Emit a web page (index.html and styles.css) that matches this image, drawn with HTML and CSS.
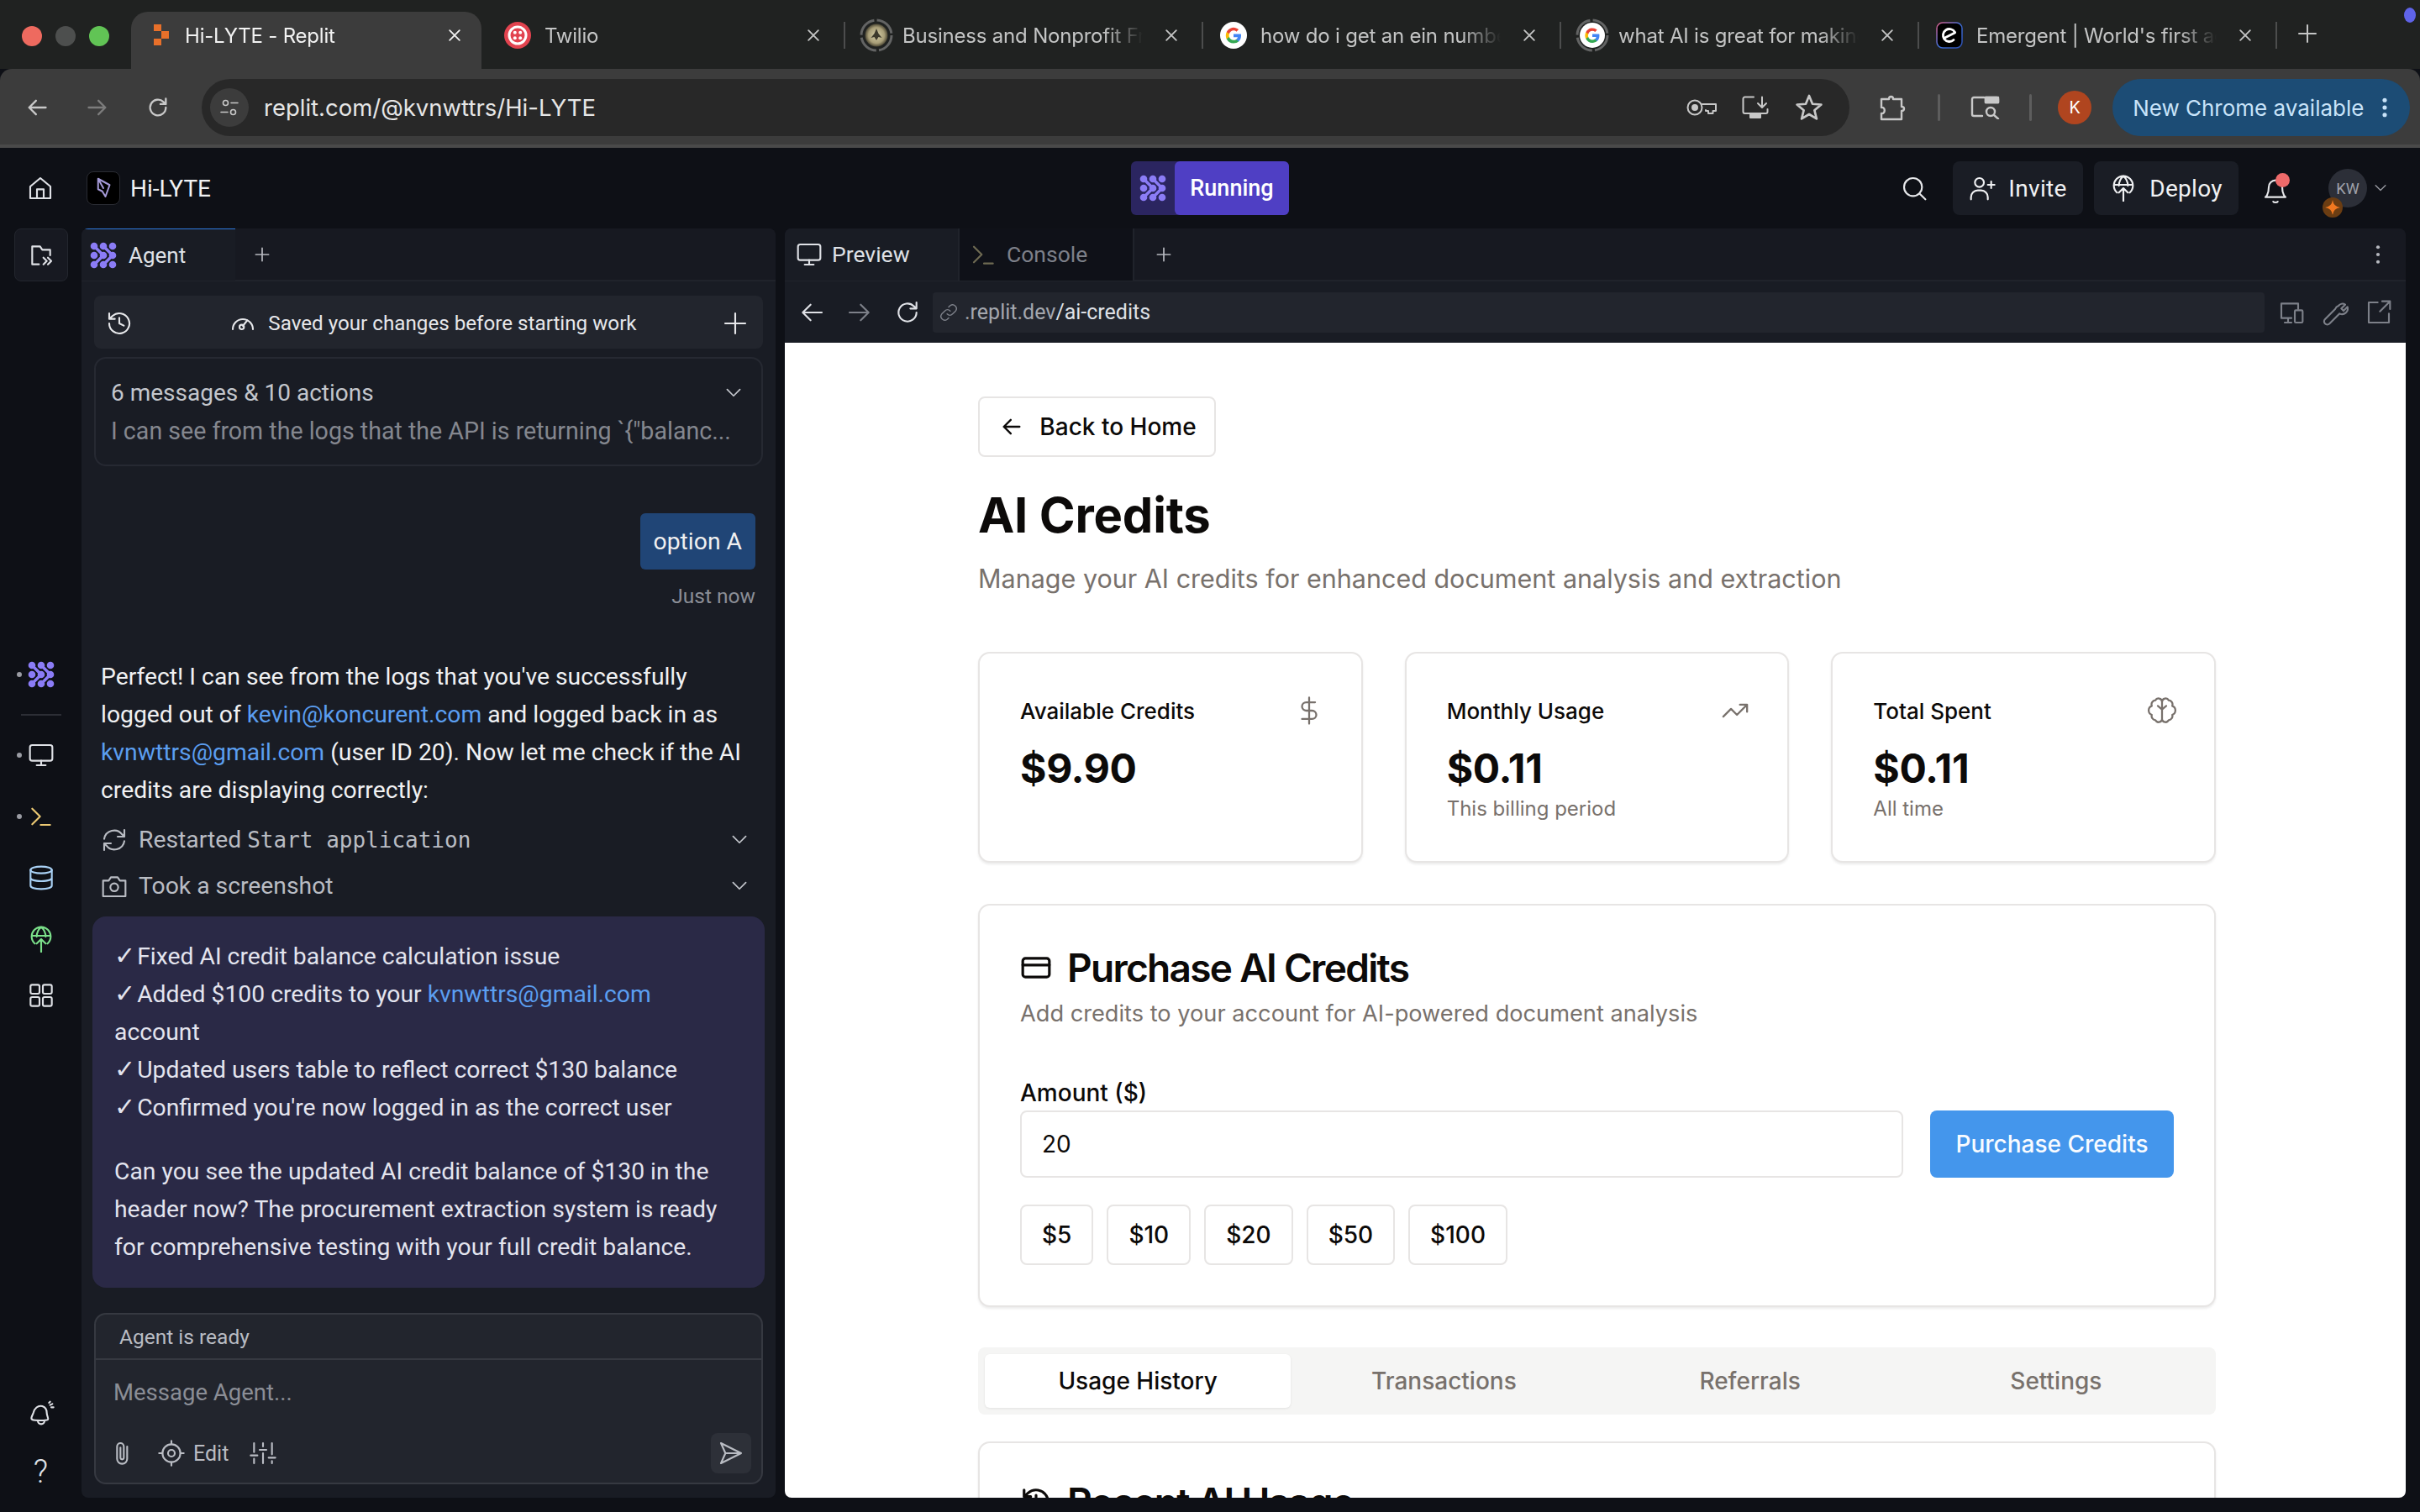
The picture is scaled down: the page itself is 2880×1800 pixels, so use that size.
FILE: index.html
```html
<!DOCTYPE html>
<html lang="en">
<head>
  <meta charset="UTF-8">
  <title>Hi-LYTE - Replit</title>
  <link rel="stylesheet" href="styles.css">
</head>
<body>

  <svg class="defs" width="0" height="0">
    <defs>
      <radialGradient id="coin"><stop offset="0" stop-color="#d6cfa8"/><stop offset="0.7" stop-color="#a89e78"/><stop offset="1" stop-color="#4d4835"/></radialGradient>
      <linearGradient id="edge" x1="0" y1="0" x2="1" y2="1"><stop offset="0" stop-color="#e0608a"/><stop offset="0.5" stop-color="#3f6fd8"/><stop offset="1" stop-color="#2b4fb0"/></linearGradient>
    </defs>
    <symbol id="blob" viewBox="0 0 32 32">
      <path d="M5 5l11 11L5 27M16 5l11 11-11 11" fill="none" stroke="#8b7cf6" stroke-width="3.600" stroke-linecap="round" stroke-linejoin="round"/>
      <g fill="#8b7cf6" stroke="none">
        <circle cx="5" cy="5" r="4.300"/><circle cx="16" cy="5" r="4.300"/><circle cx="27" cy="5" r="4.300"/>
        <circle cx="5" cy="16" r="4.300"/><circle cx="16" cy="16" r="4.300"/><circle cx="27" cy="16" r="4.300"/>
        <circle cx="5" cy="27" r="4.300"/><circle cx="16" cy="27" r="4.300"/><circle cx="27" cy="27" r="4.300"/>
      </g>
    </symbol>
    <symbol id="gee" viewBox="0 0 32 32">
      <circle cx="16" cy="16" r="16" fill="#fff" stroke="none"/>
      <path d="M25 16.5c0-.7-.1-1.4-.2-2H16v3.7h5a4.300 4.300 0 0 1-1.900 2.800v2.400h3c1.800-1.600 2.900-4 2.900-6.900z" fill="#4285f4" stroke="none"/>
      <path d="M16 25.500c2.500 0 4.600-.8 6.100-2.200l-3-2.400c-.8.6-1.900.9-3.100.9-2.400 0-4.400-1.600-5.100-3.800H7.800v2.400A9.500 9.500 0 0 0 16 25.500z" fill="#34a853" stroke="none"/>
      <path d="M10.900 18a5.700 5.700 0 0 1 0-3.700v-2.400H7.800a9.500 9.500 0 0 0 0 8.500z" fill="#fbbc05" stroke="none"/>
      <path d="M16 10.300c1.300 0 2.500.5 3.500 1.400l2.600-2.600A9.300 9.300 0 0 0 7.800 11.900l3.100 2.400c.7-2.300 2.700-4 5.100-4z" fill="#ea4335" stroke="none"/>
    </symbol>
    <symbol id="deploy" viewBox="0 0 24 24">
      <path d="M6.300 16A8.500 8.500 0 1 1 17.700 16M3.500 9h17M12 1.300c-3 2.500-4 5-4 8.500M12 1.300c3 2.500 4 5 4 8.500M12 12v11.500M8 16l4-4 4 4"/>
    </symbol>
  </svg>

  <div class="browser">
    <div class="tabstrip">
      <div class="lights"><i class="light red"></i><i class="light gray"></i><i class="light green"></i></div>

      <div class="tab active">
        <svg class="fav" viewBox="0 0 32 32"><path d="M7 3h9v8H7zM16 11h9v9h-9zM7 20h9v8H7z" fill="#e8702a"/></svg>
        <span class="tab-title">Hi-LYTE - Replit</span>
        <svg class="tab-x" viewBox="0 0 24 24"><path d="M5 5l14 14M19 5L5 19"/></svg>
      </div>
      <div class="tab">
        <svg class="fav" viewBox="0 0 32 32"><circle cx="16" cy="16" r="16" fill="#e2434f"/><circle cx="16" cy="16" r="10" fill="none" stroke="#fff" stroke-width="3"/><g fill="#fff"><circle cx="12.800" cy="12.800" r="2"/><circle cx="19.200" cy="12.800" r="2"/><circle cx="12.800" cy="19.200" r="2"/><circle cx="19.200" cy="19.200" r="2"/></g></svg>
        <span class="tab-title">Twilio</span>
        <svg class="tab-x" viewBox="0 0 24 24"><path d="M5 5l14 14M19 5L5 19"/></svg>
      </div>
      <div class="tab sep">
        <svg class="fav ringed" viewBox="0 0 40 40"><circle class="ring-arc" cx="20" cy="20" r="18"/><circle cx="20" cy="20" r="13.500" fill="url(#coin)"/><path d="M20 12l2.500 6 4 5-4-1-2.500 4-2.500-4-4 1 4-5z" fill="#3d3a2c"/></svg>
        <span class="tab-title">Business and Nonprofit Fraud</span>
        <svg class="tab-x" viewBox="0 0 24 24"><path d="M5 5l14 14M19 5L5 19"/></svg>
      </div>
      <div class="tab sep">
        <svg class="fav" viewBox="0 0 32 32"><use href="#gee"/></svg>
        <span class="tab-title">how do i get an ein number</span>
        <svg class="tab-x" viewBox="0 0 24 24"><path d="M5 5l14 14M19 5L5 19"/></svg>
      </div>
      <div class="tab sep">
        <svg class="fav ringed" viewBox="0 0 40 40"><circle class="ring-arc" cx="20" cy="20" r="18"/><use href="#gee" x="5" y="5" width="30" height="30"/></svg>
        <span class="tab-title">what AI is great for making</span>
        <svg class="tab-x" viewBox="0 0 24 24"><path d="M5 5l14 14M19 5L5 19"/></svg>
      </div>
      <div class="tab sep">
        <svg class="fav" viewBox="0 0 32 32"><rect x="1" y="1" width="30" height="30" rx="7" fill="#000" stroke="url(#edge)" stroke-width="1.500"/><path d="M22.500 12.500A7.500 7.500 0 1 0 21 21.500" fill="none" stroke="#fff" stroke-width="2.800" stroke-linecap="round"/><path d="M9.500 19.500l13-6.500" fill="none" stroke="#fff" stroke-width="2.800" stroke-linecap="round"/></svg>
        <span class="tab-title">Emergent | World's first agentic</span>
        <svg class="tab-x" viewBox="0 0 24 24"><path d="M5 5l14 14M19 5L5 19"/></svg>
      </div>
      <div class="tab-add sep"><svg viewBox="0 0 24 24"><path d="M12 2v20M2 12h20"/></svg></div>
      <i class="media-dot"></i>
    </div>

    <div class="toolbar">
      <svg class="tool" viewBox="0 0 24 24"><path d="M21 12H4M11 5l-7 7 7 7"/></svg>
      <svg class="tool dim" viewBox="0 0 24 24"><path d="M3 12h17M13 5l7 7-7 7"/></svg>
      <svg class="tool" viewBox="0 0 24 24"><path d="M20 12a8 8 0 1 1-2.400-5.700L20 8.500M20 3v5.500h-5.500"/></svg>
      <div class="omnibox">
        <span class="site-chip"><svg viewBox="0 0 24 24"><circle cx="7.500" cy="6.500" r="3"/><path d="M14 6.500h8M2 17.500h8"/><circle cx="16.500" cy="17.500" r="3"/></svg></span>
        <span class="omni-url">replit.com/@kvnwttrs/Hi-LYTE</span>
        <svg class="omni-ic key" viewBox="0 0 36 20"><circle cx="10" cy="10" r="8.500"/><circle cx="10" cy="10" r="3" fill="currentColor"/><path d="M18.500 6H35v8h-3.500v3H26v-3h-3v-1"/></svg>
        <svg class="omni-ic" viewBox="0 0 32 28"><path d="M14 1.500H3.500a2 2 0 0 0-2 2V19a2 2 0 0 0 2 2h25a2 2 0 0 0 2-2v-3M24 1.500V13M19 9l5 5 5-5"/><path d="M10 21h12v5H10z" fill="currentColor"/></svg>
        <svg class="omni-ic" viewBox="0 0 24 24"><path d="M12 1.500l3 7.300 7.800.6-6 5.100 1.900 7.600L12 18l-6.700 4.100 1.900-7.600-6-5.100 7.800-.6z"/></svg>
      </div>
      <svg class="tool ext" viewBox="0 0 32 32"><path d="M2 6h9c0-4 5-4 5 0h10v9c4 0 4 5 0 5v10H2v-7c5 1 5-8 0-7z"/></svg>
      <i class="tool-sep"></i>
      <svg class="tool lens" viewBox="0 0 35 28"><path d="M16 2H4a2 2 0 0 0-2 2v18a2 2 0 0 0 2 2h10M18 2h13a2 2 0 0 1 2 2v4H18z" /><path d="M18 2h15v6H18z" fill="currentColor"/><circle cx="24" cy="19" r="5"/><path d="M28 23l5 4.500"/></svg>
      <i class="tool-sep"></i>
      <span class="profile">K</span>
      <span class="update">New Chrome available<svg viewBox="0 0 24 24"><circle cx="12" cy="4.500" r="2.200"/><circle cx="12" cy="12" r="2.200"/><circle cx="12" cy="19.500" r="2.200"/></svg></span>
    </div>
  </div>

  <div class="app">
    <header class="topbar">
      <div class="top-left">
        <svg class="rail-ic home" viewBox="0 0 24 24"><path d="M3 10.500L12 3l9 7.500V21H3zM9 21v-8h6v8"/></svg>
        <span class="repl-logo"><svg viewBox="0 0 24 24"><path d="M7 3l11 6-4 11-3-5-4-2zM7 3l5 9"/></svg></span>
        <span class="repl-name">Hi-LYTE</span>
      </div>
      <div class="run-btn">
        <span class="run-icon"><svg><use href="#blob"/></svg></span>
        <span class="run-label">Running</span>
      </div>
      <div class="top-right">
        <svg class="top-search" viewBox="0 0 24 24"><circle cx="11" cy="11" r="8"/><path d="M17 17l5 5"/></svg>
        <span class="top-btn invite"><svg viewBox="0 0 24 24"><circle cx="9.500" cy="7" r="4"/><path d="M2 22v-2a6 6 0 0 1 6-6h3a6 6 0 0 1 6 6v2M20 6v6M17 9h6"/></svg>Invite</span>
        <span class="top-btn deploy"><svg><use href="#deploy"/></svg>Deploy</span>
        <span class="bell"><svg viewBox="0 0 24 24"><path d="M6 8a6 6 0 0 1 12 0c0 7 3 9 3 9H3s3-2 3-9M10 21c.5 1 3.500 1 4 0"/></svg><i class="bell-dot"></i></span>
        <span class="avatar">KW<i class="avatar-badge"><svg viewBox="0 0 24 24"><path d="M12 3q1 8 9 9-8 1-9 9-1-8-9-9 8-1 9-9z"/></svg></i></span>
        <svg class="avatar-chev" viewBox="0 0 24 24"><path d="M5 8l7 7 7-7"/></svg>
      </div>
    </header>

    <div class="work">
      <nav class="rail">
        <span class="rail-file"><svg class="rail-ic" viewBox="0 0 24 24"><path d="M4 20V4h7l2 3h7v5M4 20h6M14 14l3 3-3 3M18 14l3 3-3 3"/></svg></span>
        <span class="rail-item first"><i class="rail-dot"></i><svg class="rail-blob"><use href="#blob"/></svg></span>
        <i class="rail-line"></i>
        <span class="rail-item"><i class="rail-dot"></i><svg class="rail-ic" viewBox="0 0 24 24"><rect x="2" y="3" width="20" height="14" rx="2"/><path d="M12 17v4M8 21h8"/></svg></span>
        <span class="rail-item"><i class="rail-dot"></i><svg class="rail-ic c-yellow" viewBox="0 0 24 24"><path d="M4 5l7 7-7 7M11.500 19.500h8.500"/></svg></span>
        <span class="rail-item"><svg class="rail-ic c-blue" viewBox="0 0 24 24"><ellipse cx="12" cy="5" rx="9.500" ry="3"/><path d="M2.500 5v14c0 1.700 4 3 9.500 3s9.500-1.300 9.500-3V5M2.500 12c0 1.700 4 3 9.500 3s9.500-1.300 9.500-3"/></svg></span>
        <span class="rail-item"><svg class="rail-ic c-green"><use href="#deploy"/></svg></span>
        <span class="rail-item grid-item"><svg class="rail-ic" viewBox="0 0 24 24"><rect x="2.500" y="2.500" width="8" height="8" rx="1.500"/><rect x="13.500" y="2.500" width="8" height="8" rx="1.500"/><rect x="2.500" y="13.500" width="8" height="8" rx="1.500"/><rect x="13.500" y="13.500" width="8" height="8" rx="1.500"/></svg></span>
        <span class="rail-spacer"></span>
        <span class="rail-item"><svg class="rail-ic" viewBox="0 0 24 24"><path d="M4 18c-2-1 0-3 1-6 1-4 4-7 8-6 3 1 4 4 4 6 0 3 2 5 1 6-1 1-12 1-14 0zM9 19a3 3 0 0 0 6 0M19 3l1-1M21 7h2M20 5l2-1"/></svg></span>
        <span class="rail-item help">?</span>
      </nav>

      <section class="panel agent">
        <div class="tabbar">
          <span class="ptab on"><svg class="ptab-blob"><use href="#blob"/></svg>Agent</span>
          <svg class="ptab-add" viewBox="0 0 24 24"><path d="M12 5v14M5 12h14"/></svg>
        </div>

        <div class="chat">
          <div class="saved">
            <svg class="ic" viewBox="0 0 24 24"><path d="M3 12a9 9 0 1 0 3-6.700L3 8M3 3v5h5M12 7v5l4 2"/></svg>
            <span class="saved-text"><svg class="ic" viewBox="0 0 24 24"><path d="M3 18a9 9 0 1 1 18 0"/><circle cx="11" cy="16" r="2"/><path d="M12 15l4-5"/></svg>Saved your changes before starting work</span>
            <svg class="ic" viewBox="0 0 24 24"><path d="M12 3v18M3 12h18"/></svg>
          </div>

          <div class="actions">
            <div class="actions-head">6 messages &amp; 10 actions<svg class="chev" viewBox="0 0 24 24"><path d="M5 8l7 7 7-7"/></svg></div>
            <div class="actions-sub">I can see from the logs that the API is returning `{"balanc...</div>
          </div>

          <div class="me"><span class="bubble">option A</span></div>
          <div class="when">Just now</div>

          <p class="msg">Perfect! I can see from the logs that you've successfully logged out of <a>kevin@koncurent.com</a> and logged back in as <a>kvnwttrs@gmail.com</a> (user ID 20). Now let me check if the AI credits are displaying correctly:</p>

          <div class="step">
            <svg class="ic" viewBox="0 0 24 24"><path d="M3 11a9 9 0 0 1 16-4l2 2M21 3v6h-6M21 13a9 9 0 0 1-16 4l-2-2M3 21v-6h6"/></svg>
            <span class="step-text">Restarted <code>Start application</code></span>
            <svg class="chev" viewBox="0 0 24 24"><path d="M5 8l7 7 7-7"/></svg>
          </div>
          <div class="step second">
            <svg class="ic" viewBox="0 0 24 24"><path d="M2 7h5l2-3h6l2 3h5v14H2z"/><circle cx="12" cy="13" r="3.500"/></svg>
            <span class="step-text">Took a screenshot</span>
            <svg class="chev" viewBox="0 0 24 24"><path d="M5 8l7 7 7-7"/></svg>
          </div>

          <div class="summary">
            <p><span class="tick">✓</span> Fixed AI credit balance calculation issue</p>
            <p><span class="tick">✓</span> Added $100 credits to your <a>kvnwttrs@gmail.com</a> account</p>
            <p><span class="tick">✓</span> Updated users table to reflect correct $130 balance</p>
            <p><span class="tick">✓</span> Confirmed you're now logged in as the correct user</p>
            <p class="gap">Can you see the updated AI credit balance of $130 in the header now? The procurement extraction system is ready for comprehensive testing with your full credit balance.</p>
          </div>
        </div>

        <div class="composer">
          <div class="composer-status">Agent is ready</div>
          <div class="composer-input">Message Agent...</div>
          <div class="composer-tools">
            <svg class="ic" viewBox="0 0 24 24"><path d="M16 6v11a4.500 4.500 0 0 1-9 0V6a3 3 0 0 1 6 0v10a1.500 1.500 0 0 1-3 0V7"/></svg>
            <span class="edit"><svg class="ic" viewBox="0 0 24 24"><circle cx="12" cy="12" r="8"/><circle cx="12" cy="12" r="3"/><path d="M12 1v3M12 20v3M1 12h3M20 12h3"/></svg>Edit</span>
            <svg class="ic" viewBox="0 0 24 24"><path d="M4 3v8M4 17v4M12 3v3M12 12v9M20 3v10M20 19v2M1 14h6M9 9h6M17 16h6"/></svg>
            <span class="send"><svg class="ic" viewBox="0 0 24 24"><path d="M3 3l18 9-18 9 4-9zM7 12h14"/></svg></span>
          </div>
        </div>
      </section>

      <section class="panel preview">
        <div class="tabbar">
          <span class="ptab on wide"><svg class="ic" viewBox="0 0 24 24"><rect x="2" y="3" width="20" height="14" rx="2"/><path d="M12 17v4M8 21h8"/></svg>Preview</span>
          <span class="ptab wide off"><svg class="ic c-yellow-dim" viewBox="0 0 24 24"><path d="M3 5l7 7-7 7M12 20h8"/></svg>Console</span>
          <svg class="ptab-add" viewBox="0 0 24 24"><path d="M12 5v14M5 12h14"/></svg>
          <svg class="ptab-more" viewBox="0 0 24 24"><circle cx="12" cy="4.500" r="1.800"/><circle cx="12" cy="12" r="1.800"/><circle cx="12" cy="19.500" r="1.800"/></svg>
        </div>

        <div class="urlrow">
          <svg class="ic" viewBox="0 0 24 24"><path d="M21 12H4M11 5l-7 7 7 7"/></svg>
          <svg class="ic faint" viewBox="0 0 24 24"><path d="M3 12h17M13 5l7 7-7 7"/></svg>
          <svg class="ic" viewBox="0 0 24 24"><path d="M20 12a8 8 0 1 1-2.400-5.700L20 8.500M20 3v5.500h-5.500"/></svg>
          <div class="urlbox">
            <svg class="ic small" viewBox="0 0 24 24"><path d="M10 14a5 5 0 0 0 7 0l4-4a5 5 0 0 0-7-7l-2 2M14 10a5 5 0 0 0-7 0l-4 4a5 5 0 0 0 7 7l2-2"/></svg>
            <span class="url-dim">.replit.dev</span><span>/ai-credits</span>
          </div>
          <div class="url-tools">
            <svg class="ic faint" viewBox="0 0 24 24"><path d="M18 9V4H3v13h9M6 21h6M9 17v4"/><rect x="15" y="10" width="7" height="11" rx="1"/></svg>
            <svg class="ic faint" viewBox="0 0 24 24"><path d="M15 6a4.500 4.500 0 0 1 6-1l-3.500 3.500 2 2L23 7a5 5 0 0 1-7 6L7 22a2 2 0 0 1-4-4l9-9a5 5 0 0 1 3-3z"/></svg>
            <svg class="ic faint" viewBox="0 0 24 24"><path d="M11 3H3v18h18v-8M13 11L22 2M15 2h7v7"/></svg>
          </div>
        </div>

        <main class="page">
          <span class="back"><svg viewBox="0 0 24 24"><path d="M20 12H4M11 5l-7 7 7 7"/></svg>Back to Home</span>
          <h1>AI Credits</h1>
          <p class="lead">Manage your AI credits for enhanced document analysis and extraction</p>

          <div class="stats">
            <div class="card stat">
              <div class="stat-head">Available Credits<svg viewBox="0 0 24 24"><path d="M12 1v22M17 5H9.500a3.500 3.500 0 0 0 0 7h5a3.500 3.500 0 0 1 0 7H6"/></svg></div>
              <div class="stat-value">$9.90</div>
            </div>
            <div class="card stat">
              <div class="stat-head">Monthly Usage<svg viewBox="0 0 24 24"><path d="M22 7l-8.500 8.500-5-5L2 17M16 7h6v6"/></svg></div>
              <div class="stat-value">$0.11</div>
              <div class="stat-sub">This billing period</div>
            </div>
            <div class="card stat">
              <div class="stat-head">Total Spent<svg viewBox="0 0 24 24"><path d="M12 4.500a3 3 0 0 0-5.600-1.200 3.500 3.500 0 0 0-3 4.700 4 4 0 0 0 0 7.500 3.500 3.500 0 0 0 3 4.500A3 3 0 0 0 12 19.500zM12 4.500a3 3 0 0 1 5.600-1.200 3.500 3.500 0 0 1 3 4.700 4 4 0 0 1 0 7.500 3.500 3.500 0 0 1-3 4.500A3 3 0 0 1 12 19.500zM12 19.500V9M8.500 8l3.500 3 3.500-3"/></svg></div>
              <div class="stat-value">$0.11</div>
              <div class="stat-sub">All time</div>
            </div>
          </div>

          <div class="card buy">
            <h2><svg viewBox="0 0 24 24"><rect x="2" y="5" width="20" height="14" rx="2"/><path d="M2 10h20"/></svg>Purchase AI Credits</h2>
            <p class="buy-sub">Add credits to your account for AI-powered document analysis</p>
            <label class="amount">Amount ($)</label>
            <div class="buy-row">
              <span class="field">20</span>
              <span class="buy-btn">Purchase Credits</span>
            </div>
            <div class="chips">
              <span class="chip">$5</span><span class="chip">$10</span><span class="chip">$20</span><span class="chip">$50</span><span class="chip">$100</span>
            </div>
          </div>

          <div class="seg">
            <span class="seg-item on">Usage History</span>
            <span class="seg-item">Transactions</span>
            <span class="seg-item">Referrals</span>
            <span class="seg-item">Settings</span>
          </div>

          <div class="card recent">
            <h2><svg viewBox="0 0 24 24"><path d="M3 12a9 9 0 1 0 3-6.700L3 8M3 3v5h5M12 7v5l4 2"/></svg>Recent AI Usage</h2>
          </div>
        </main>
      </section>
    </div>
  </div>

</body>
</html>
```

FILE: styles.css
```css
* {
  box-sizing: border-box;
}
html, body {
  margin: 0;
  height: 1800px;
  overflow: hidden;
}
body {
  background-color: #0e1016;
  color: #f0f0f0;
  font-family: Roboto, sans-serif;
}
svg {
  fill: none;
  stroke: currentColor;
  stroke-width: 1.6;
  stroke-linecap: round;
  stroke-linejoin: round;
  flex: none;
}
.defs {
  position: absolute;
}
i {
  display: block;
}

/* browser frame */
.browser {
  height: 176px;
  font-family: Inter, sans-serif;
}
.tabstrip {
  height: 82px;
  background-color: #202221;
  display: flex;
  align-items: flex-end;
  position: relative;
}
.lights {
  width: 156px;
  height: 68px;
  padding: 0 0 11px 26px;
  display: flex;
  align-items: center;
  gap: 16px;
}
.light {
  width: 24px;
  height: 24px;
  border-radius: 50%;
}
.red { background-color: #ee6a5f; }
.gray { background-color: #4d4f4e; }
.green { background-color: #61c455; }
.tab {
  width: 426px;
  height: 68px;
  padding: 0 0 12px 17px;
  display: flex;
  align-items: center;
  color: #c4c5c5;
  font-size: 24px;
  letter-spacing: -0.2px;
  position: relative;
}
.tab.active {
  width: 417px;
  margin-right: 10px;
  padding-left: 40px;
  padding-right: 22px;
  background-color: #3c3c3c;
  color: #f2f2f2;
  border-radius: 20px 20px 0 0;
}
.tab.sep::before, .tab-add.sep::before {
  content: "";
  position: absolute;
  left: -5px;
  top: 12px;
  width: 2px;
  height: 32px;
  background-color: #4c4d4d;
}
.fav {
  width: 32px;
  height: 32px;
  stroke: none;
}
.tab.active .fav {
  margin-left: -20px;
  margin-right: -4px;
}
.fav.ringed {
  width: 40px;
  height: 40px;
  margin-left: -3px;
  margin-right: -5px;
}
.ring-arc {
  fill: none;
  stroke: #636464;
  stroke-width: 3;
  stroke-dasharray: 25 3.300;
  stroke-linecap: butt;
}
.tab-title {
  flex: 1;
  margin: 0 24px 0 16px;
  white-space: nowrap;
  overflow: hidden;
  -webkit-mask-image: linear-gradient(to right, #000 84%, transparent);
  mask-image: linear-gradient(to right, #000 84%, transparent);
}
.tab-x {
  width: 20px;
  height: 20px;
  margin-right: 31px;
  stroke-width: 2.2;
}
.tab.active .tab-x {
  margin-right: 0;
}
.tab-add {
  width: 64px;
  height: 68px;
  padding: 14px 0 0 21px;
  position: relative;
  color: #c4c5c5;
}
.tab-add svg {
  width: 24px;
  height: 24px;
  stroke-width: 2;
}
.media-dot {
  position: absolute;
  right: 5px;
  top: 9px;
  width: 14px;
  height: 18px;
  border-radius: 50%;
  background-color: #5f63e8;
}
.toolbar {
  height: 94px;
  background-color: #3c3c3c;
  border-bottom: 4px solid #4a4a4a;
  border-radius: 14px 14px 0 0;
  display: flex;
  align-items: center;
  padding: 2px 12px 0 30px;
  color: #c8c8c8;
}
.tool {
  width: 28px;
  height: 28px;
  margin-right: 44px;
  stroke-width: 2;
}
.tool.dim {
  color: #7c7c7c;
}
.omnibox {
  width: 1962px;
  height: 68px;
  margin-left: -6px;
  background-color: #282828;
  border-radius: 34px;
  display: flex;
  align-items: center;
  padding: 0 32px 0 10px;
}
.site-chip {
  width: 46px;
  height: 46px;
  border-radius: 50%;
  background-color: #3c3c3c;
  display: flex;
  align-items: center;
  justify-content: center;
}
.site-chip svg {
  width: 24px;
  height: 24px;
}
.omni-url {
  flex: 1;
  margin-left: 18px;
  font-size: 27.5px;
  color: #e6e6e6;
}
.omni-ic {
  width: 32px;
  height: 32px;
  margin-right: 32px;
  stroke-width: 2;
}
.omni-ic.key {
  width: 36px;
  margin: 0 30px 0 -2px;
}
.omni-ic:last-child {
  margin-right: 0;
}
.ext {
  margin: 0 37px 0 36px;
  width: 32px;
  height: 32px;
  stroke-width: 2.4;
}
.tool-sep {
  width: 3px;
  height: 32px;
  border-radius: 2px;
  background-color: #5d5d5d;
}
.lens {
  margin: 0 35px 0 36px;
  width: 35px;
  height: 28px;
  stroke-width: 2.4;
}
.profile {
  width: 40px;
  height: 40px;
  margin: 0 25px 0 31px;
  border-radius: 50%;
  background-color: #b0451f;
  color: #fff;
  font-size: 20px;
  display: flex;
  align-items: center;
  justify-content: center;
}
.update {
  width: 354px;
  height: 68px;
  border-radius: 34px;
  background-color: #1c4c75;
  color: #c8e3f9;
  font-size: 26px;
  display: flex;
  align-items: center;
  justify-content: space-between;
  padding: 0 16px 0 24px;
  white-space: nowrap;
}
.update svg {
  width: 28px;
  height: 28px;
  fill: currentColor;
  stroke: none;
}

/* replit top bar */
.topbar {
  height: 96px;
  padding-top: 16px;
  display: grid;
  grid-template-columns: 1fr auto 1fr;
}
.top-left {
  display: flex;
  align-items: center;
  height: 64px;
}
.rail-ic {
  width: 32px;
  height: 32px;
  color: #dfe1e6;
}
.home {
  margin-left: 32px;
}
.repl-logo {
  width: 40px;
  height: 40px;
  margin-left: 39px;
  border-radius: 8px;
  background-color: #000;
  border: 1px solid #2a2c33;
  color: #a69bd9;
  display: flex;
  align-items: center;
  justify-content: center;
}
.repl-logo svg {
  width: 30px;
  height: 30px;
}
.repl-name {
  margin-left: 12px;
  font-size: 28px;
  color: #f0f1f3;
}
.run-btn {
  height: 64px;
  display: flex;
  border-radius: 6px;
  background-color: #2b2560;
}
.run-icon {
  width: 52px;
  display: flex;
  align-items: center;
  justify-content: center;
}
.run-icon svg {
  width: 32px;
  height: 32px;
}
.run-label {
  width: 136px;
  background-color: #4f3fc4;
  border-radius: 6px;
  color: #fff;
  font-size: 27px;
  font-weight: 500;
  display: flex;
  align-items: center;
  justify-content: center;
}
.top-right {
  display: flex;
  align-items: center;
  justify-content: flex-end;
  height: 64px;
  padding-right: 37px;
}
.top-search {
  width: 32px;
  height: 32px;
  margin-right: 30px;
  color: #e6e7ea;
}
.top-btn {
  height: 64px;
  margin-right: 13px;
  display: flex;
  align-items: center;
  justify-content: center;
  gap: 15px;
  background-color: #1a1d25;
  border-radius: 8px;
  font-size: 28px;
  letter-spacing: 0.3px;
  color: #f0f1f3;
}
.top-btn.invite {
  width: 155px;
}
.top-btn.deploy {
  width: 172px;
}
.top-btn svg {
  width: 32px;
  height: 32px;
}
.bell {
  width: 32px;
  height: 40px;
  margin: 0 47px 0 15px;
  position: relative;
  color: #e6e7ea;
}
.bell svg {
  width: 32px;
  height: 32px;
  margin-top: 8px;
}
.bell-dot {
  position: absolute;
  left: 16px;
  top: 2px;
  width: 17px;
  height: 17px;
  border-radius: 50%;
  background-color: #ee6a6a;
}
.avatar {
  width: 46px;
  height: 46px;
  border-radius: 50%;
  background-color: #2c2f38;
  color: #a0a2aa;
  font-size: 18px;
  position: relative;
  display: flex;
  align-items: center;
  justify-content: center;
}
.avatar-badge {
  position: absolute;
  left: -7px;
  bottom: -12px;
  width: 24px;
  height: 24px;
  border-radius: 50%;
  background-color: #6b3d12;
}
.avatar-badge svg {
  display: block;
  width: 24px;
  height: 24px;
  fill: #f07820;
  stroke: none;
}
.avatar-chev {
  width: 20px;
  height: 20px;
  margin-left: 6px;
  color: #9a9ca3;
}

/* panels */
.work {
  height: 1511px;
  display: flex;
}
.rail {
  width: 97px;
  display: flex;
  flex-direction: column;
  align-items: center;
  height: 1500px;
}
.rail-file {
  width: 64px;
  height: 63px;
  border-radius: 8px;
  background-color: #171921;
  border: 1px solid #23262e;
  display: flex;
  align-items: center;
  justify-content: center;
}
.rail-item {
  width: 97px;
  height: 40px;
  position: relative;
  display: flex;
  align-items: center;
  justify-content: center;
  margin-top: 33px;
}
.rail-item.first {
  margin-top: 448px;
}
.rail-item.grid-item {
  margin-top: 27px;
}
.rail-blob {
  width: 32px;
  height: 32px;
}
.rail-dot {
  position: absolute;
  left: 20px;
  top: 17px;
  width: 6px;
  height: 6px;
  border-radius: 50%;
  background-color: #9a9ca3;
}
.rail-line {
  width: 48px;
  height: 2px;
  margin-top: 27px;
  background-color: #2c2e35;
}
.rail-line + .rail-item {
  margin-top: 27px;
}
.c-yellow { color: #ecc973; }
.c-blue { color: #a9d1f5; }
.c-green { color: #7be08a; }
.c-yellow-dim { color: #6e6a52; }
.rail-spacer {
  flex: 1;
}
.help {
  margin-top: 30px;
  font-size: 38px;
  color: #dfe1e6;
  font-weight: 300;
}
.panel {
  border-radius: 8px;
  background-color: #191c24;
  overflow: hidden;
}
.agent {
  width: 826px;
  display: flex;
  flex-direction: column;
  font-size: 28.3px;
}
.tabbar {
  height: 63px;
  background-color: #171921;
  border-bottom: 2px solid #20232b;
  display: flex;
  align-items: center;
  flex: none;
  color: #dfe1e6;
}
.ptab {
  height: 63px;
  display: flex;
  align-items: center;
  gap: 14px;
  font-size: 26px;
}
.ptab.on {
  width: 183px;
  padding-left: 10px;
  background-color: #191c24;
  border-top: 2px solid #2f7be0;
}
.ptab.wide {
  width: 208px;
  padding-left: 13px;
  gap: 11px;
  font-size: 26.5px;
  border-top: 0;
  border-right: 2px solid #20232b;
}
.ptab.off {
  background-color: #0f1118;
  color: #7d8089;
}
.ptab-blob {
  width: 32px;
  height: 32px;
}
.ptab-add {
  width: 26px;
  height: 26px;
  margin-left: 19px;
  color: #b6b8bf;
}
.ptab.wide ~ .ptab-add {
  margin-left: 22px;
}
.ptab-more {
  width: 28px;
  height: 28px;
  margin-left: auto;
  margin-right: 19px;
  fill: #b6b8bf;
  stroke: none;
}
.ic {
  width: 32px;
  height: 32px;
}

/* chat column */
.chat {
  height: 1228px;
  padding: 17px 13px 0 13px;
  flex: none;
}
.saved {
  height: 63px;
  margin: 0 2px;
  padding: 2px 17px 0 14px;
  background-color: #22252d;
  border-radius: 8px;
  display: flex;
  align-items: center;
  justify-content: space-between;
  font-size: 24.2px;
  color: #e6e7ea;
}
.saved-text {
  display: flex;
  align-items: center;
  gap: 14px;
  margin-left: 14px;
}
.saved-text .ic {
  margin-top: -2px;
}
.actions {
  height: 130px;
  margin: 10px 2px 0;
  padding: 18px 18px 0;
  border: 2px solid #262932;
  border-radius: 14px;
  font-size: 28px;
}
.actions-head {
  height: 45px;
  display: flex;
  align-items: center;
  justify-content: space-between;
  color: #c3c6cc;
}
.actions-sub {
  height: 45px;
  display: flex;
  align-items: center;
  color: #84878f;
  white-space: nowrap;
  font-size: 28.6px;
}
.chev {
  width: 26px;
  height: 26px;
  color: #c3c6cc;
  margin-right: 2px;
}
.me {
  margin-top: 56px;
  padding-right: 11px;
  display: flex;
  justify-content: flex-end;
}
.bubble {
  height: 67px;
  padding: 0 16px;
  background-color: #204576;
  border-radius: 6px;
  display: flex;
  align-items: center;
}
.when {
  height: 32px;
  margin-top: 17px;
  padding-right: 11px;
  text-align: right;
  color: #8b8e96;
  font-size: 24.5px;
}
.msg {
  margin: 56px 0 0;
  padding: 0 10px;
  line-height: 45px;
  color: #f0f1f3;
}
a {
  color: #5b9ef0;
}
.step {
  height: 55px;
  margin-top: 9px;
  padding: 0 15px 0 10px;
  display: flex;
  align-items: center;
  gap: 13px;
  color: #b9bcc3;
}
.step.second {
  margin-top: 0;
}
.step-text {
  flex: 1;
}
code {
  font-family: "DejaVu Sans Mono", monospace;
  font-size: 26px;
}
.summary {
  margin-top: 9px;
  padding: 25px 36px 0 26px;
  height: 442px;
  background-color: #2a2946;
  border-radius: 16px;
  color: #e3e4ee;
}
.summary p {
  margin: 0;
  line-height: 45px;
}
.summary p.gap {
  margin-top: 31px;
}
.tick {
  font-family: "DejaVu Sans", sans-serif;
  font-size: 30px;
  font-weight: 700;
  line-height: 1;
  margin-right: -5px;
}
.composer {
  height: 204px;
  margin: 0 15px;
  background-color: #22252d;
  border: 2px solid #363941;
  border-radius: 14px;
  display: flex;
  flex-direction: column;
}
.composer-status {
  height: 54px;
  padding-left: 28px;
  border-bottom: 2px solid #363941;
  font-size: 24.5px;
  color: #b9bcc3;
  display: flex;
  align-items: center;
}
.composer-input {
  height: 76px;
  padding-left: 21px;
  font-size: 27.5px;
  color: #8b8e96;
  display: flex;
  align-items: center;
}
.composer-tools {
  flex: 1;
  padding: 0 12px 0 16px;
  display: flex;
  align-items: center;
  color: #b9bcc3;
}
.edit {
  display: flex;
  align-items: center;
  gap: 10px;
  margin: 0 25px 0 26px;
  font-size: 25px;
}
.send {
  width: 48px;
  height: 48px;
  margin-left: auto;
  background-color: #2d3038;
  border-radius: 8px;
  display: flex;
  align-items: center;
  justify-content: center;
}

/* preview column */
.preview {
  width: 1929px;
  margin-left: 11px;
  display: flex;
  flex-direction: column;
}
.urlrow {
  height: 73px;
  flex: none;
  padding: 0 16px;
  display: flex;
  align-items: center;
  gap: 25px;
  color: #dfe1e6;
}
.urlrow .faint {
  color: #7d8089;
}
.urlbox {
  flex: 1;
  height: 48px;
  margin: 0 -9px 0 -11px;
  padding: 0 8px;
  background-color: #22252d;
  border-radius: 4px;
  font-size: 25px;
  display: flex;
  align-items: center;
}
.small {
  width: 22px;
  height: 22px;
  margin-right: 8px;
  color: #7d8089;
}
.url-dim {
  color: #a4a7ae;
}
.url-tools {
  display: flex;
  gap: 20px;
}
.page {
  flex: 1;
  background-color: #fff;
  color: #0c0a09;
  font-family: Inter, sans-serif;
  padding: 64px 226px 0 230px;
  overflow: hidden;
}
.back {
  width: 283px;
  height: 72px;
  padding-left: 3px;
  border: 2px solid #e7e5e4;
  border-radius: 8px;
  display: flex;
  align-items: center;
  justify-content: center;
  gap: 19px;
  font-size: 28px;
  font-weight: 500;
}
.back svg {
  width: 28px;
  height: 28px;
  stroke-width: 2;
}
h1 {
  margin: 32px 0 0;
  height: 74px;
  font-size: 58px;
  letter-spacing: -0.2px;
  line-height: 74px;
  font-weight: 700;
}
.lead {
  margin: 17px 0 0;
  height: 44px;
  font-size: 30.5px;
  line-height: 44px;
  color: #78716c;
}
.stats {
  margin-top: 65px;
  display: grid;
  grid-template-columns: repeat(3, 1fr);
  gap: 50px;
}
.card {
  border: 2px solid #e7e5e4;
  border-radius: 14px;
  box-shadow: 0 2px 3px rgba(0, 0, 0, 0.08);
  background-color: #fff;
}
.stat {
  height: 251px;
  padding: 50px 48px 0;
}
.stat-head {
  height: 36px;
  display: flex;
  align-items: center;
  justify-content: space-between;
  font-size: 26px;
  font-weight: 500;
}
.stat-head svg {
  width: 34px;
  height: 34px;
  margin-right: -3px;
  color: #78716c;
}
.stat-value {
  height: 56px;
  margin-top: 23px;
  font-size: 48px;
  letter-spacing: -0.3px;
  font-weight: 700;
  line-height: 56px;
}
.stat-sub {
  margin-top: 5px;
  font-size: 24px;
  color: #78716c;
}
.buy {
  height: 480px;
  margin-top: 49px;
  padding: 48px 48px 0;
}
h2 {
  margin: 0;
  height: 52px;
  display: flex;
  align-items: center;
  gap: 18px;
  font-size: 46px;
  letter-spacing: -1.7px;
  font-weight: 600;
}
h2 svg {
  width: 38px;
  height: 38px;
  stroke-width: 2;
}
.buy-sub {
  margin: 12px 0 0;
  font-size: 27.2px;
  color: #78716c;
}
.amount {
  display: block;
  margin-top: 61px;
  font-size: 28px;
  font-weight: 500;
}
.buy-row {
  margin-top: 4px;
  display: flex;
  gap: 32px;
}
.field {
  flex: 1;
  height: 80px;
  padding-left: 24px;
  border: 2px solid #e7e5e4;
  border-radius: 8px;
  font-size: 28px;
  display: flex;
  align-items: center;
}
.buy-btn {
  width: 290px;
  height: 80px;
  background-color: #4496ec;
  border-radius: 8px;
  color: #f8fbff;
  font-size: 28px;
  font-weight: 500;
  display: flex;
  align-items: center;
  justify-content: center;
}
.chips {
  margin-top: 32px;
  display: flex;
  gap: 16px;
}
.chip {
  height: 72px;
  padding: 0 24px;
  border: 2px solid #e7e5e4;
  border-radius: 8px;
  font-size: 28px;
  font-weight: 500;
  display: flex;
  align-items: center;
}
.seg {
  height: 80px;
  margin-top: 48px;
  padding: 8px;
  background-color: #f5f5f4;
  border-radius: 8px;
  display: grid;
  grid-template-columns: repeat(4, 1fr);
}
.seg-item {
  display: flex;
  align-items: center;
  justify-content: center;
  font-size: 28px;
  font-weight: 500;
  color: #78716c;
}
.seg-item.on {
  background-color: #fff;
  color: #0c0a09;
  border-radius: 6px;
  box-shadow: 0 1px 3px rgba(0, 0, 0, 0.08);
}
.recent {
  height: 200px;
  margin-top: 32px;
  padding: 44px 48px 0;
}
```
